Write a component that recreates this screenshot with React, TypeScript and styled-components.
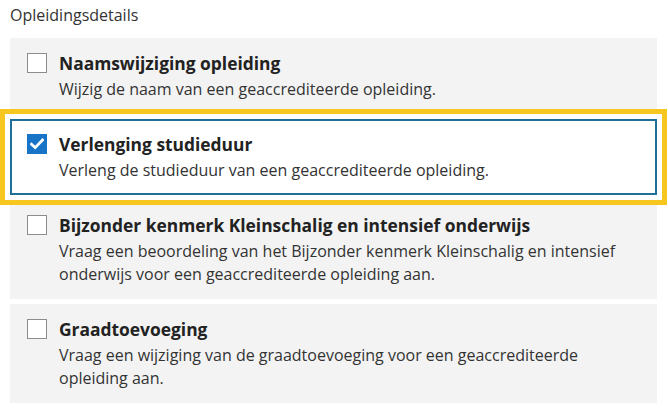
import React, { useState } from "react";
import styled, { createGlobalStyle, css } from "styled-components";

const GlobalStyle = createGlobalStyle`
  html, body { margin: 0; padding: 0; background: #ffffff; }
  body { font-family: "Open Sans", "Noto Sans", "Liberation Sans", sans-serif; color: #333333; }
  * { box-sizing: border-box; }
`;

const Page = styled.div`
  padding: 4px 11px 0 10px;
  width: 668px;
`;

const Heading = styled.div`
  font-size: 16px;
  line-height: 22px;
  color: #333333;
  margin-bottom: 12px;
`;

const List = styled.div`
  display: flex;
  flex-direction: column;
  gap: 5px;
`;

const Card = styled.label<{ $selected: boolean }>`
  display: flex;
  align-items: flex-start;
  gap: 12px;
  background: #f3f3f3;
  padding: 13px 16px 13px 17px;
  cursor: pointer;
  ${(p) =>
    p.$selected &&
    css`
      position: relative;
      z-index: 1;
      background: #ffffff;
      border: 2px solid #1f6f99;
      padding: 11px 14px 11px 15px;
      box-shadow: 0 0 0 5px #ffffff, 0 0 0 10px #f7c71f;
    `}
`;

const Box = styled.span<{ $checked: boolean }>`
  flex: none;
  width: 20px;
  height: 20px;
  margin-top: 2px;
  display: flex;
  align-items: center;
  justify-content: center;
  background: ${(p) => (p.$checked ? "#1874c6" : "#ffffff")};
  border: 1px solid ${(p) => (p.$checked ? "#1874c6" : "#8c8c8c")};
`;

const Texts = styled.span`
  display: flex;
  flex-direction: column;
  gap: 3px;
`;

const Title = styled.span`
  font-size: 17.4px;
  line-height: 24px;
  font-weight: 700;
  color: #222222;
`;

const Desc = styled.span`
  font-size: 16px;
  line-height: 23px;
  color: #333333;
`;

const items = [
  {
    title: "Naamswijziging opleiding",
    desc: "Wijzig de naam van een geaccrediteerde opleiding.",
  },
  {
    title: "Verlenging studieduur",
    desc: "Verleng de studieduur van een geaccrediteerde opleiding.",
  },
  {
    title: "Bijzonder kenmerk Kleinschalig en intensief onderwijs",
    desc: "Vraag een beoordeling van het Bijzonder kenmerk Kleinschalig en intensief onderwijs voor een geaccrediteerde opleiding aan.",
  },
  {
    title: "Graadtoevoeging",
    desc: "Vraag een wijziging van de graadtoevoeging voor een geaccrediteerde opleiding aan.",
  },
];

const Check = () => (
  <svg width="14" height="12" viewBox="0 0 14 12" aria-hidden="true">
    <path d="M1.5 6.2 L5.2 9.6 L12.5 2" fill="none" stroke="#ffffff" strokeWidth="2.8" strokeLinecap="square" />
  </svg>
);

export default function App() {
  const [checked, setChecked] = useState<number[]>([1]);
  const toggle = (i: number) =>
    setChecked((c) => (c.includes(i) ? c.filter((x) => x !== i) : [...c, i]));
  return (
    <>
      <GlobalStyle />
      <Page>
        <Heading>Opleidingsdetails</Heading>
        <List>
          {items.map((it, i) => {
            const on = checked.includes(i);
            return (
              <Card key={it.title} $selected={i === 1} onClick={() => toggle(i)}>
                <Box $checked={on}>{on && <Check />}</Box>
                <Texts>
                  <Title>{it.title}</Title>
                  <Desc>{it.desc}</Desc>
                </Texts>
              </Card>
            );
          })}
        </List>
      </Page>
    </>
  );
}
